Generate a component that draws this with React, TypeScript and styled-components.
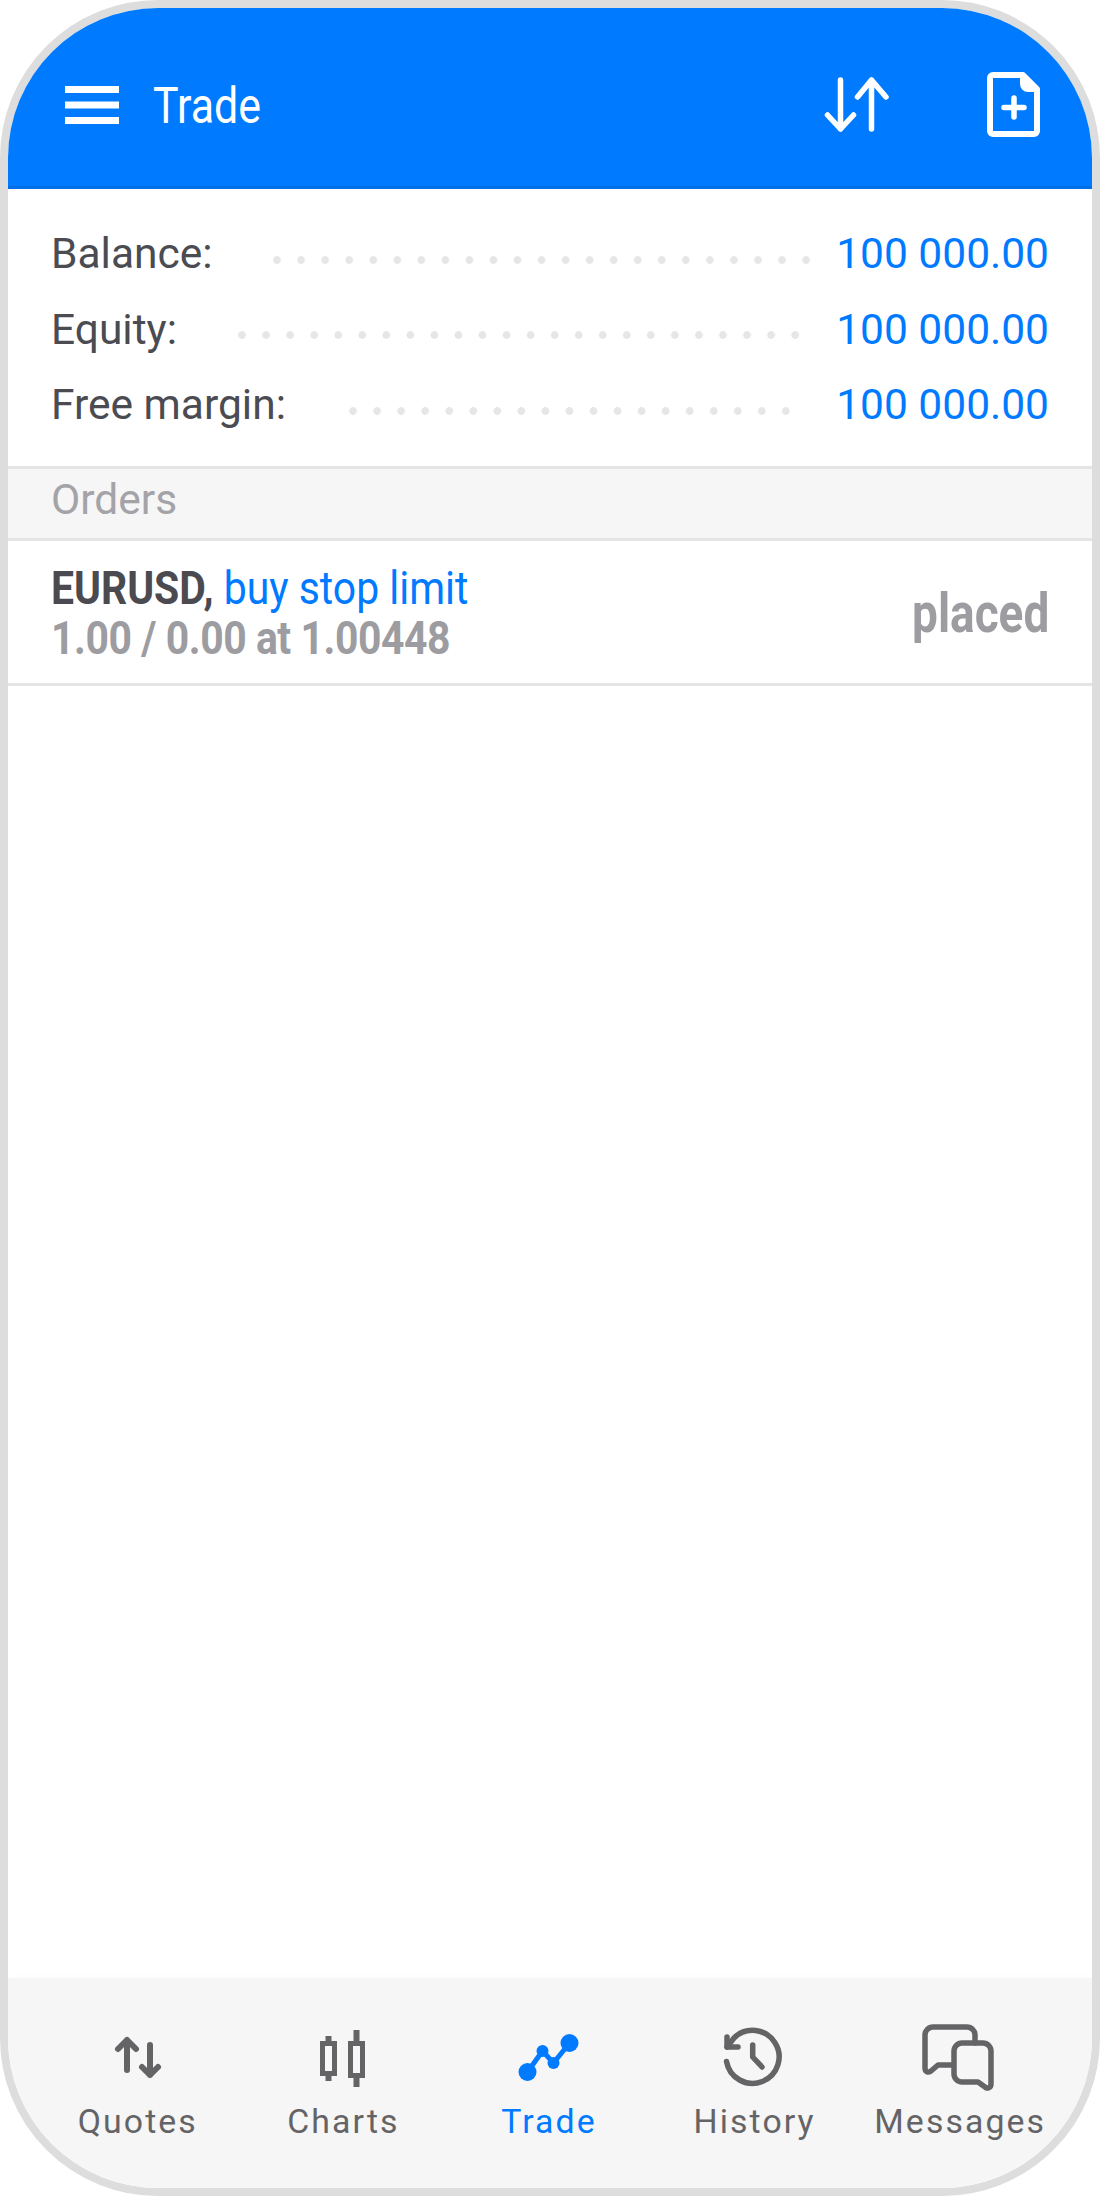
import styled, { createGlobalStyle } from 'styled-components';

const blue = '#007aff';
const grey = '#646466';
const DOT_STEP = 24.05;

const GlobalStyle = createGlobalStyle`
  html, body {
    margin: 0;
    padding: 0;
    background: #fff;
  }
  body {
    font-family: Roboto, "Liberation Sans", sans-serif;
  }
`;

const Phone = styled.div`
  box-sizing: border-box;
  width: 1100px;
  height: 2196px;
  border: 8px solid #dddddd;
  border-radius: 158px;
  overflow: hidden;
  display: flex;
  flex-direction: column;
  background: #fff;
`;

const Header = styled.header`
  box-sizing: border-box;
  height: 181px;
  flex: none;
  background: ${blue};
  border-bottom: 3px solid #0070e8;
  padding-top: 15px;
  display: flex;
  align-items: center;
`;

const MenuButton = styled.svg`
  width: 54px;
  height: 38px;
  margin-left: 57px;
`;

const Title = styled.h1`
  margin: 3px 0 0 34px;
  font-size: 50.5px;
  line-height: 60px;
  font-weight: 400;
  color: #fff;
  transform: scaleX(0.85);
  transform-origin: left center;
  flex: 1;
`;

const SortIcon = styled.svg`
  width: 70px;
  height: 66px;
  margin-right: 95px;
`;

const DocIcon = styled.svg`
  width: 53px;
  height: 65px;
  margin-right: 52px;
`;

const Summary = styled.section`
  box-sizing: border-box;
  height: 277px;
  flex: none;
  padding: 27px 43px 0 43px;
`;

const SummaryRow = styled.div`
  display: flex;
  align-items: center;
  height: 75.5px;
`;

const Label = styled.span`
  font-size: 42.5px;
  color: #4b4b52;
`;

const Leader = styled.span<{ $dots: number; $gap: number }>`
  width: ${(p) => p.$dots * DOT_STEP}px;
  margin-left: ${(p) => p.$gap}px;
  margin-top: 12px;
  height: 10px;
  background-image: radial-gradient(circle at center, #e6e6e6 3.5px, transparent 4.2px);
  background-size: ${DOT_STEP}px 10px;
  background-repeat: repeat-x;
`;

const Value = styled.span`
  margin-left: auto;
  font-size: 42.5px;
  color: ${blue};
`;

const SectionTitle = styled.div`
  box-sizing: border-box;
  height: 75px;
  flex: none;
  background: #f6f6f6;
  border-top: 3px solid #e4e4e4;
  border-bottom: 3px solid #e4e4e4;
  padding-left: 43px;
  font-size: 42.5px;
  line-height: 62px;
  color: #a3a3a8;
`;

const OrderRow = styled.div`
  box-sizing: border-box;
  height: 145px;
  flex: none;
  border-bottom: 3px solid #e4e4e4;
  padding: 0 43px 0 43px;
  display: flex;
  align-items: center;
  justify-content: space-between;
`;

const OrderInfo = styled.div`
  font-size: 47px;
  line-height: 50px;
  transform: scaleX(0.87);
  transform-origin: left center;
  white-space: nowrap;
  margin-top: 2px;
`;

const Symbol = styled.b`
  color: #4a4a50;
`;

const OrderType = styled.span`
  color: ${blue};
`;

const OrderLine = styled.div`
  font-weight: 700;
  color: #9c9ca1;
  letter-spacing: -0.5px;
`;

const OrderState = styled.div`
  font-size: 56px;
  font-weight: 700;
  color: #9c9ca1;
  transform: scaleX(0.82);
  transform-origin: right center;
  margin-top: 2px;
`;

const Spacer = styled.div`
  flex: 1;
`;

const TabBar = styled.nav`
  box-sizing: border-box;
  height: 210px;
  flex: none;
  background: #f6f6f6;
  box-shadow: 0 -6px 8px -4px rgba(0, 0, 0, 0.015);
  display: grid;
  grid-template-columns: repeat(5, 1fr);
  padding: 40px 29px 0 27px;
`;

const Tab = styled.div<{ $active?: boolean }>`
  display: flex;
  flex-direction: column;
  align-items: center;
  color: ${(p) => (p.$active ? blue : grey)};
  font-size: 33.8px;
  letter-spacing: 2.1px;
  line-height: 44px;
`;

const TabIcon = styled.svg`
  width: 80px;
  height: 80px;
  margin-bottom: 2px;
`;

const summary = [
  { label: 'Balance:', dots: 23, gap: 52 },
  { label: 'Equity:', dots: 24, gap: 53 },
  { label: 'Free margin:', dots: 19, gap: 55 },
];

const App = () => (
  <>
    <GlobalStyle />
    <Phone>
      <Header>
        <MenuButton viewBox="0 0 54 38">
          <path d="M0 3.5h54M0 19h54M0 34.500h54" stroke="#fff" strokeWidth="7" />
        </MenuButton>
        <Title>Trade</Title>
        <SortIcon viewBox="0 0 70 66" fill="none" stroke="#fff" strokeWidth="5.500" strokeLinecap="round" strokeLinejoin="round">
          <path d="M18.500 8v49M5.500 43l13 14 13-14" />
          <path d="M49.500 57V8M35.500 25L49.500 8L64 25" />
        </SortIcon>
        <DocIcon viewBox="0 0 53 65">
          <path
            d="M6 3h30l14 14v42a3 3 0 0 1-3 3H6a3 3 0 0 1-3-3V6a3 3 0 0 1 3-3z"
            fill="none"
            stroke="#fff"
            strokeWidth="6"
            strokeLinejoin="round"
          />
          <path d="M33 2v10a8 8 0 0 0 8 8h11z" fill="#fff" />
          <path d="M27 26v19M17 35.500h20" stroke="#fff" strokeWidth="5.500" strokeLinecap="round" />
        </DocIcon>
      </Header>
      <Summary>
        {summary.map((row) => (
          <SummaryRow key={row.label}>
            <Label>{row.label}</Label>
            <Leader $dots={row.dots} $gap={row.gap} />
            <Value>100 000.00</Value>
          </SummaryRow>
        ))}
      </Summary>
      <SectionTitle>Orders</SectionTitle>
      <OrderRow>
        <OrderInfo>
          <Symbol>EURUSD,</Symbol> <OrderType>buy stop limit</OrderType>
          <OrderLine>1.00 / 0.00 at 1.00448</OrderLine>
        </OrderInfo>
        <OrderState>placed</OrderState>
      </OrderRow>
      <Spacer />
      <TabBar>
        <Tab>
          <TabIcon viewBox="0 0 80 80" fill="none" stroke={grey} strokeWidth="6" strokeLinecap="round" strokeLinejoin="round">
            <path d="M29 22v30M20 31l9-9 9 9" />
            <path d="M52 27v30M44 49l8 8 8-8" />
          </TabIcon>
          Quotes
        </Tab>
        <Tab>
          <TabIcon viewBox="0 0 80 80" fill="none" stroke={grey} strokeWidth="5">
            <rect x="19.500" y="25.500" width="12" height="30" />
            <rect x="47.500" y="25.500" width="12" height="32" />
            <path d="M25.500 18v6M25.500 57v6M53.500 12v12M53.500 59v10" strokeWidth="6" />
          </TabIcon>
          Charts
        </Tab>
        <Tab $active>
          <TabIcon viewBox="0 0 80 80" fill={blue}>
            <path d="M18.500 54L33.500 33L44.500 45L60.500 25" fill="none" stroke={blue} strokeWidth="5" />
            <circle cx="18.500" cy="54" r="9" />
            <circle cx="33.500" cy="33" r="6" />
            <circle cx="44.500" cy="45" r="6" />
            <circle cx="60.500" cy="25" r="9" />
          </TabIcon>
          Trade
        </Tab>
        <Tab>
          <TabIcon viewBox="0 0 80 80" fill="none" stroke={grey} strokeWidth="5.500" strokeLinecap="round" strokeLinejoin="round">
            <path d="M11.500 43.500A26.500 26.500 0 1 0 19 20L12 29" />
            <path d="M12 19v10h11" />
            <path d="M37.700 27v12L47 49" />
          </TabIcon>
          History
        </Tab>
        <Tab>
          <TabIcon viewBox="0 0 80 80" fill="none" stroke={grey} strokeWidth="5.500" strokeLinejoin="round" strokeLinecap="round">
            <path d="M55 25v-8a8 8 0 0 0-8-8H13a8 8 0 0 0-8 8v33c0 4 3 5 6 3l7-6h15" />
            <path d="M42 25h21a8 8 0 0 1 8 8v33c0 4-4 5-6 3l-7-5H42a8 8 0 0 1-8-8V33a8 8 0 0 1 8-8z" />
          </TabIcon>
          Messages
        </Tab>
      </TabBar>
    </Phone>
  </>
);

export default App;
